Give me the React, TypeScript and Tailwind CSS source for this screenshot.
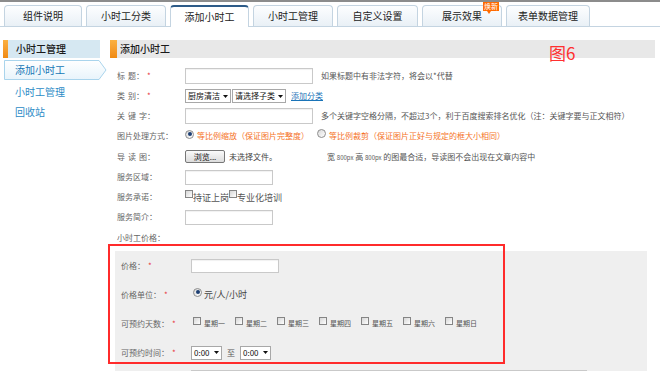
import React from "react";

const tabs = [
  { name: "组件说明", w: "w-[78px]" },
  { name: "小时工分类", w: "w-[80px]" },
  { name: "添加小时工", w: "w-[79px]", active: true },
  { name: "小时工管理", w: "w-[80px]" },
  { name: "自定义设置", w: "w-[81px]" },
  { name: "展示效果", w: "w-[80px]", badge: true },
  { name: "表单数据管理", w: "w-[84px]" },
];

const days = ["星期一", "星期二", "星期三", "星期四", "星期五", "星期六", "星期日"];

function Star() {
  return <span className="ml-[3px] text-[8px] text-[#e8383d]">*</span>;
}

function Gap() {
  return <span className="inline-block w-[3px]" />;
}

function TextInput({ w, h = "h-[16px]" }: { w: string; h?: string }) {
  return <span className={`inline-block bg-white border border-[#c9c9c9] shadow-[inset_0_1px_1px_rgba(0,0,0,0.06)] ${w} ${h}`} />;
}

function Select({ label, w }: { label: string; w: string }) {
  return (
    <span className={`inline-flex items-center justify-between h-[14px] border border-[#a8a8a8] bg-white px-[2px] text-[8px] text-[#111] ${w}`}>
      {label}
      <svg width="5" height="3" viewBox="0 0 5 3">
        <path d="M0 0h5L2.5 3z" fill="#111" />
      </svg>
    </span>
  );
}

function Radio({ checked }: { checked?: boolean }) {
  return (
    <span className="inline-flex items-center justify-center w-[9px] h-[9px] rounded-full border border-[#8d8d8d] bg-linear-to-br from-[#d9d9d9] to-white">
      {checked && <span className="w-[4px] h-[4px] rounded-full bg-[#1d3f73]" />}
    </span>
  );
}

function Checkbox() {
  return <span className="inline-block w-[8px] h-[8px] border border-[#858585] bg-linear-to-br from-[#d6d6d6] to-white" />;
}

function TabBar() {
  return (
    <div className="flex items-end gap-[4px] pl-[4px] pt-[3px] h-[25px] border-b border-[#c4d4e1]">
      {tabs.map((t) => (
        <div
          key={t.name}
          className={`relative flex items-center justify-center rounded-t-[4px] border border-b-0 text-[10px] text-[#222] ${t.w} ${
            t.active
              ? "h-[22px] -mb-[1px] z-10 bg-white border-[#c4d4e1] border-t-2 border-t-[#2d5b88]"
              : "h-[21px] bg-linear-to-b from-[#fdfeff] to-[#e9f0f6] border-[#c4d4e1]"
          }`}
        >
          {t.name}
          {t.badge && (
            <span className="absolute left-[60px] -top-[4px] bg-[#ff6a00] text-white text-[7px] leading-[9px] px-[1px]">
              焕新
              <span className="absolute left-[4px] top-[9px] border-x-[2px] border-t-[3px] border-x-transparent border-t-[#ff6a00]" />
            </span>
          )}
        </div>
      ))}
    </div>
  );
}

function SideNav() {
  return (
    <aside className="w-[103px]">
      <div className="flex h-[18px] w-[97px]">
        <span className="w-[5px] bg-linear-to-b from-[#fbb040] to-[#f08a10]" />
        <span className="flex-1 flex items-center pl-[8px] bg-[#d6e8f2] text-[10px] font-medium text-[#1a1a1a]">小时工管理</span>
      </div>
      <div className="relative ml-[1px] mt-[2px] h-[20px] w-[103px]">
        <svg className="absolute inset-0" width="103" height="20" viewBox="0 0 103 20">
          <defs>
            <linearGradient id="navActive" x1="0" y1="0" x2="0" y2="1">
              <stop offset="0" stopColor="#ffffff" />
              <stop offset="1" stopColor="#e8f4fb" />
            </linearGradient>
          </defs>
          <polygon points="0.5,0.5 95,0.5 102,10 95,19.5 0.5,19.5" fill="url(#navActive)" stroke="#a9d4ec" />
        </svg>
        <span className="relative block pl-[11px] leading-[20px] text-[10px] text-[#1777b6]">添加小时工</span>
      </div>
      <div className="mt-[2px] pl-[12px] leading-[20px] text-[10px] text-[#2c8bc6]">小时工管理</div>
      <div className="pl-[12px] leading-[20px] text-[10px] text-[#2c8bc6]">回收站</div>
    </aside>
  );
}

export default function App() {
  return (
    <div className="relative w-[660px] h-[371px] overflow-hidden bg-white font-['Noto_Sans_CJK_SC','Noto_Sans',sans-serif] text-[8px] leading-none text-[#555]">
      <div className="h-[2px] bg-[#8c8c8c]" />
      <TabBar />

      <div className="flex pl-[3px] pt-[13px]">
        <SideNav />

        <main className="ml-[4px] mr-[5px] flex-1">
          <div className="flex h-[18px] bg-[#e8e8e8]">
            <span className="w-[7px] bg-linear-to-b from-[#fbb040] to-[#f08a10]" />
            <span className="flex items-center pl-[3px] text-[10px] font-medium text-[#1a1a1a]">添加小时工</span>
          </div>

          <div className="pl-[7px] pt-[8px] text-[#666]">
            <div className="flex items-center h-[20px]">
              <span className="w-[68px]">标<Gap />题：<Star /></span>
              <TextInput w="w-[128px]" />
              <span className="ml-[8px] text-[#555]">如果标题中有非法字符，将会以*代替</span>
            </div>
            <div className="flex items-center h-[20px]">
              <span className="w-[68px]">类<Gap />别：<Star /></span>
              <Select label="厨房清洁" w="w-[46px]" />
              <span className="ml-[1px]" />
              <Select label="请选择子类" w="w-[54px]" />
              <span className="ml-[5px] text-[#1a74b8] underline">添加分类</span>
            </div>
            <div className="flex items-center h-[20px]">
              <span className="w-[68px]">关<Gap />键<Gap />字：</span>
              <TextInput w="w-[128px]" />
              <span className="ml-[8px] text-[#555]">多个关键字空格分隔，不超过3个，利于百度搜索排名优化（注：关键字要与正文相符）</span>
            </div>
            <div className="flex items-center h-[20px]">
              <span className="w-[68px]">图片处理方式：</span>
              <span className="-mt-[4px]"><Radio checked /></span>
              <span className="ml-[3px] text-[#f5731f]">等比例缩放（保证图片完整度）</span>
              <span className="ml-[8px] -mt-[4px]"><Radio /></span>
              <span className="ml-[3px] text-[#f5731f]">等比例裁剪（保证图片正好与规定的框大小相同）</span>
            </div>
            <div className="flex items-center h-[21px]">
              <span className="w-[68px]">导<Gap />读<Gap />图：</span>
              <span className="flex items-center w-[142px]">
                <span className="flex items-center justify-center w-[40px] h-[13px] rounded-[2px] border border-[#777] bg-linear-to-b from-[#fafafa] to-[#dcdcdc] text-[#111]">浏览...</span>
                <span className="ml-[4px] text-[#444]">未选择文件。</span>
              </span>
              <span className="text-[#555]">
                宽 <span className="text-[6px]">800px</span> 高 <span className="text-[6px]">800px</span> 的图最合适，导读图不会出现在文章内容中
              </span>
            </div>
            <div className="flex items-center h-[20px]">
              <span className="w-[68px]">服务区域：</span>
              <TextInput w="w-[88px]" h="h-[15px]" />
            </div>
            <div className="flex items-center h-[20px]">
              <span className="w-[68px]">服务承诺：</span>
              <span className="-mt-[5px]"><Checkbox /></span>
              <span className="text-[9px] text-[#555]">持证上岗</span>
              <span className="-mt-[5px]"><Checkbox /></span>
              <span className="text-[9px] text-[#555]">专业化培训</span>
            </div>
            <div className="flex items-center h-[20px]">
              <span className="w-[68px]">服务简介：</span>
              <TextInput w="w-[88px]" h="h-[15px]" />
            </div>
            <div className="flex items-center h-[21px]">
              <span>小时工价格：</span>
            </div>

            <div className="-ml-[2px] mr-[8px] mt-[3px] bg-[#efefef] pl-[6px]">
              <div className="flex items-center h-[29px]">
                <span className="w-[70px]">价格：<Star /></span>
                <TextInput w="w-[88px]" h="h-[14px]" />
              </div>
              <div className="flex items-center h-[29px]">
                <span className="w-[72px]">价格单位：<Star /></span>
                <span className="-mt-[5px]"><Radio checked /></span>
                <span className="ml-[2px] text-[9px] text-[#444]">元/人/小时</span>
              </div>
              <div className="flex items-center h-[29px]">
                <span className="w-[72px]">可预约天数：<Star /></span>
                {days.map((d) => (
                  <span key={d} className="flex items-center w-[42px]">
                    <span className="-mt-[4px]"><Checkbox /></span>
                    <span className="ml-[3px] text-[7px] text-[#555]">{d}</span>
                  </span>
                ))}
              </div>
              <div className="flex items-center h-[29px]">
                <span className="w-[70px]">可预约时间：<Star /></span>
                <Select label="0:00" w="w-[31px]" />
                <span className="mx-[5px] text-[#555]">至</span>
                <Select label="0:00" w="w-[31px]" />
              </div>
              <div className="flex pt-[3px] h-[40px]">
                <span className="w-[70px]" />
                <TextInput w="w-[396px]" h="h-[40px]" />
              </div>
            </div>
          </div>
        </main>
      </div>

      <div className="absolute left-[108px] top-[244px] w-[397px] h-[120px] border-2 border-[#ff2b2b]" />
      <div className="absolute left-[549px] top-[44px] text-[17px] leading-none text-[#ff3030]">图6</div>
    </div>
  );
}
